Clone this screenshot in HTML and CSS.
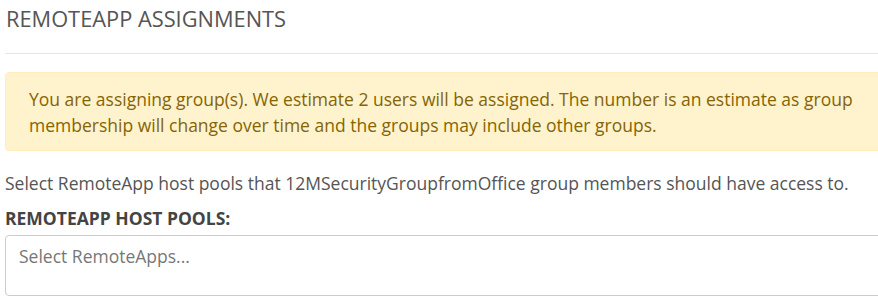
FILE: index.html
```html
<!DOCTYPE html>
<html>
<head>
<meta charset="utf-8">
<link rel="stylesheet" href="styles.css">
</head>
<body>
<div class="page">
  <h2 class="title">REMOTEAPP ASSIGNMENTS</h2>
  <hr class="divider">
  <div class="alert">You are assigning group(s). We estimate 2 users will be assigned. The number is an estimate as group membership will change over time and the groups may include other groups.</div>
  <p class="hint">Select RemoteApp host pools that 12MSecurityGroupfromOffice group members should have access to.</p>
  <label class="field-label">REMOTEAPP HOST POOLS:</label>
  <div class="select-box"><span class="placeholder">Select RemoteApps...</span></div>
</div>
</body>
</html>
```

FILE: styles.css
```css
html, body {
  margin: 0;
  padding: 0;
  overflow: hidden;
  background: #fff;
}
body {
  font-family: "Open Sans", "Liberation Sans", sans-serif;
  color: #555;
}
.page {
  width: 900px;
  padding-left: 5px;
}
.title {
  margin: 4px 0 0 1px;
  font-size: 21.8px;
  font-weight: 400;
  line-height: 30px;
  color: #555;
}
.divider {
  margin: 19px 0 0 0;
  border: 0;
  border-top: 1px solid #e5e5e5;
  height: 0;
}
.alert {
  margin-top: 18px;
  background: #fff3cd;
  border: 1px solid #ffeeba;
  border-radius: 4px;
  padding: 13px 20px 12px 23px;
  color: #856404;
  font-size: 17.5px;
  line-height: 26px;
  width: 860px;
}
.hint {
  margin: 20px 0 0 0;
  font-size: 17.5px;
  line-height: 24px;
  color: #555;
}
.field-label {
  display: block;
  margin-top: 11px;
  font-size: 17.5px;
  font-weight: 700;
  line-height: 24px;
  color: #444;
}
.select-box {
  margin-top: 5px;
  height: 61px;
  box-sizing: border-box;
  border: 1px solid #ccc;
  border-radius: 4px;
  padding: 8px 13px;
  width: 900px;
}
.placeholder {
  font-size: 17.5px;
  line-height: 24px;
  color: #777;
}
```
